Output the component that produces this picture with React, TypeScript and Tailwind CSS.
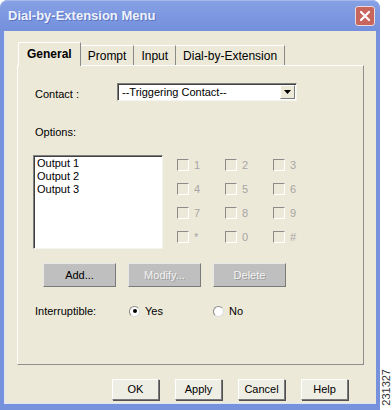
import type { ReactNode } from "react";

// Dial-by-Extension dialog (XP style, washed-out screenshot)

const sunken =
  "border border-t-[#7f7f7f] border-l-[#7f7f7f] border-r-[#f4f4f0] border-b-[#f4f4f0] shadow-[inset_1px_1px_0_#404040]";

function Tab({ label, active }: { label: string; active?: boolean }) {
  return (
    <div
      className={
        active
          ? "relative z-10 mb-[-1px] flex h-[24px] items-center border-l border-t border-r border-l-white border-t-white border-r-[#8a8a8a] bg-[#ece9d8] px-[8px] pb-[2px] text-[12px] font-bold text-black"
          : "flex h-[20px] items-center border-t border-r border-t-white border-r-[#8a8a8a] px-[7px] text-[12px] text-black"
      }
    >
      {label}
    </div>
  );
}

function CheckItem({ label }: { label: string }) {
  return (
    <div className="flex h-[24px] items-center">
      <span className="h-[12px] w-[12px] border border-t-[#8c8c8c] border-l-[#8c8c8c] border-r-white border-b-white bg-[#ece9d8]" />
      <span className="ml-[5px] text-[11px] leading-none text-[#a6a6a6]">{label}</span>
    </div>
  );
}

function GrayButton({ children, disabled }: { children: ReactNode; disabled?: boolean }) {
  return (
    <button
      className={
        "flex h-[24px] w-[73px] items-center justify-center border border-t-[#e8e8e8] border-l-[#e8e8e8] border-r-[#7a7a7a] border-b-[#7a7a7a] bg-[#bfbfbf] text-[11px] " +
        (disabled ? "text-[#f4f4f4] [text-shadow:1px_1px_0_#9d9d9d]" : "text-black")
      }
    >
      {children}
    </button>
  );
}

function Radio({ label, checked }: { label: string; checked?: boolean }) {
  return (
    <div className="flex items-center">
      <span className="flex h-[11px] w-[11px] items-center justify-center rounded-full border border-t-[#8a8a8a] border-l-[#8a8a8a] border-r-[#dcdcdc] border-b-[#dcdcdc] bg-white">
        {checked && <span className="h-[4px] w-[4px] rounded-full bg-black" />}
      </span>
      <span className="ml-[5px] text-[11px] leading-none text-black">{label}</span>
    </div>
  );
}

function DialogButton({ children }: { children: ReactNode }) {
  return (
    <button className="flex h-[21px] w-[47px] items-center justify-center border border-t-white border-l-white border-r-[#7a7a7a] border-b-[#7a7a7a] bg-[#efeee4] text-[11px] text-black shadow-[1px_1px_0_#505050]">
      {children}
    </button>
  );
}

export default function App() {
  const keys = ["1", "2", "3", "4", "5", "6", "7", "8", "9", "*", "0", "#"];

  return (
    <div className="flex h-[410px] w-[392px] bg-white font-['Liberation_Sans',Arial,sans-serif]">
      <div className="flex h-full w-[380px] flex-col rounded-t-[8px] bg-[#7792dc]">
        {/* title bar */}
        <div className="flex h-[31px] items-center justify-between rounded-t-[8px] border-t border-[#a6b8ec] bg-gradient-to-b from-[#86a0e4] to-[#7490dc] pl-[8px] pr-[5px]">
          <span className="text-[13px] font-bold text-[#eef2fc] [text-shadow:1px_1px_0_#5c74c0]">
            Dial-by-Extension Menu
          </span>
          <div className="flex h-[20px] w-[20px] items-center justify-center rounded-[3px] border border-[#eadcdc] bg-[#c8655c]">
            <svg width="12" height="12" viewBox="0 0 12 12">
              <path d="M2 2 L10 10 M10 2 L2 10" stroke="#fff" strokeWidth="2.2" strokeLinecap="round" />
            </svg>
          </div>
        </div>

        {/* body */}
        <div className="mx-[4px] mb-[6px] flex flex-1 flex-col border-b border-l border-[#dfe5f6] bg-[#ece9d8] pl-[12px] pr-[12px] pt-[11px]">
          <div className="flex h-[23px] items-end pl-[1px]">
            <Tab label="General" active />
            <Tab label="Prompt" />
            <Tab label="Input" />
            <Tab label="Dial-by-Extension" />
          </div>

          {/* tab panel */}
          <div className="flex h-[300px] flex-col border border-t-white border-l-white border-r-[#8f8f8f] border-b-[#8f8f8f] pl-[15px] pt-[17px]">
            <div className="flex h-[18px] items-center">
              <span className="w-[84px] pl-[2px] pt-[4px] text-[11px] text-black">Contact :</span>
              <div className={"flex h-[18px] w-[180px] items-center justify-between bg-white pl-[4px] pr-[1px] " + sunken}>
                <span className="text-[11px] text-black">--Triggering Contact--</span>
                <span className="flex h-[14px] w-[15px] items-center justify-center border border-t-white border-l-white border-r-[#7a7a7a] border-b-[#7a7a7a] bg-[#ece9d8]">
                  <svg width="7" height="4" viewBox="0 0 7 4">
                    <path d="M0 0 H7 L3.5 4 Z" fill="#000" />
                  </svg>
                </span>
              </div>
            </div>

            <div className="mt-[24px] h-[14px] pl-[2px] text-[11px] leading-[14px] text-black">Options:</div>

            <div className="mt-[16px] flex items-start">
              <div className={"h-[94px] w-[130px] bg-white pl-[3px] pt-[1px] text-[11px] leading-[13px] text-black " + sunken}>
                <div>Output 1</div>
                <div>Output 2</div>
                <div>Output 3</div>
              </div>
              <div className="ml-[14px] mt-[-2px] grid grid-cols-[48px_48px_48px]">
                {keys.map((k) => (
                  <CheckItem key={k} label={k} />
                ))}
              </div>
            </div>

            <div className="ml-[10px] mt-[14px] flex gap-[12px]">
              <GrayButton>Add...</GrayButton>
              <GrayButton disabled>Modify...</GrayButton>
              <GrayButton disabled>Delete</GrayButton>
            </div>

            <div className="mt-[17px] flex h-[14px] items-center">
              <span className="w-[96px] pl-[2px] text-[11px] text-black">Interruptible:</span>
              <div className="w-[84px]">
                <Radio label="Yes" checked />
              </div>
              <Radio label="No" />
            </div>
          </div>

          {/* footer buttons */}
          <div className="mt-[14px] flex justify-end gap-[16px] pr-[16px]">
            <DialogButton>OK</DialogButton>
            <DialogButton>Apply</DialogButton>
            <DialogButton>Cancel</DialogButton>
            <DialogButton>Help</DialogButton>
          </div>
        </div>
      </div>

      <div className="flex flex-1 items-end justify-center pb-[4px]">
        <span className="rotate-180 text-[11px] leading-none text-[#333] [writing-mode:vertical-rl]">231327</span>
      </div>
    </div>
  );
}
